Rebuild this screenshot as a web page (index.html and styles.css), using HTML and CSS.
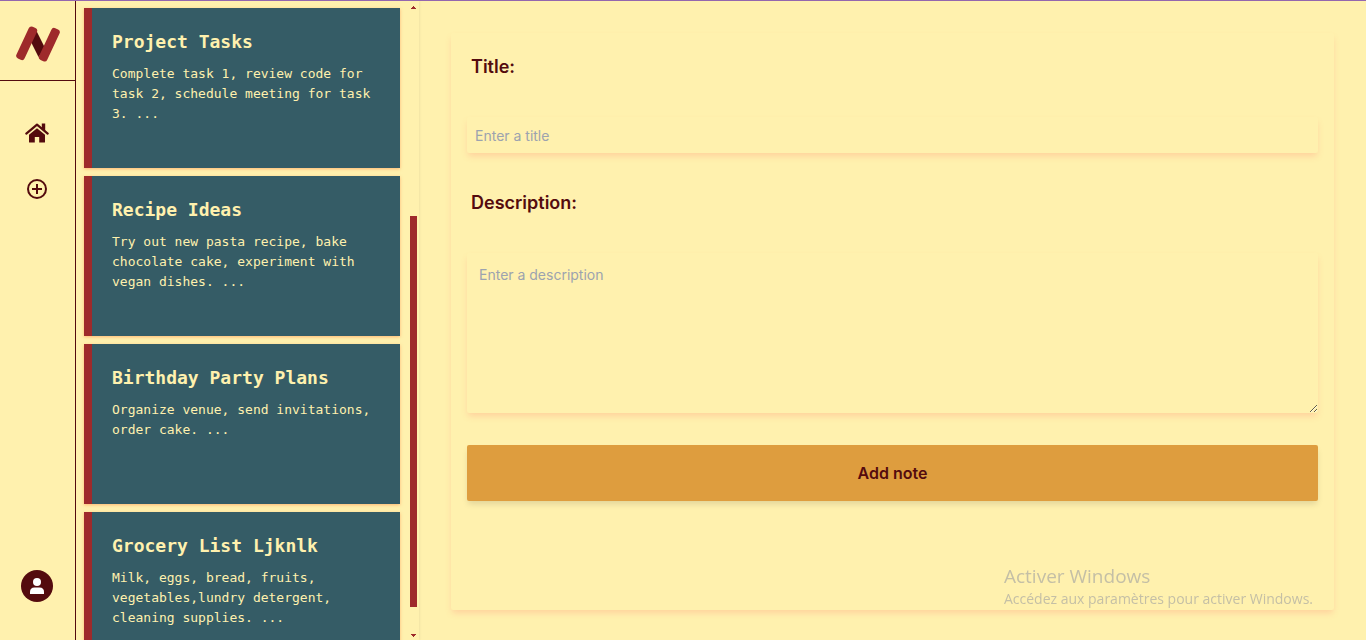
FILE: index.html
```html
<!DOCTYPE html>
<html lang="en">
<head>
<meta charset="utf-8">
<title>Notes</title>
<link rel="stylesheet" href="styles.css">
</head>
<body>
<div class="app">
  <nav class="sidebar">
    <a class="logo" href="#" aria-label="Notes">
      <svg width="45" height="36" viewBox="0 0 45 36">
        <path d="M21 4 30 22 23.500 31 15 14Z" fill="#540b0e"/>
        <g fill="#9e2a2b">
          <rect x="7.200" y="-0.200" width="9" height="35" rx="3" transform="rotate(25 11.700 17.300)"/>
          <rect x="29.800" y="1.200" width="9" height="35" rx="3" transform="rotate(25 34.300 18.700)"/>
        </g>
      </svg>
    </a>
    <a class="nav-link" href="#" aria-label="Home">
      <svg width="25" height="20" viewBox="0 0 25 20" fill="#540b0e">
        <path d="M12 5.200 4 11.800V19q0 .6.600.6H9.800V14h4.400v5.600h5.200q.6 0 .6-.6v-7.200Z"/>
        <path d="M1.300 10.600 12 1.700 22.700 10.600" fill="none" stroke="#540b0e" stroke-width="2.200" stroke-linecap="round" stroke-linejoin="round"/>
        <path d="M16.800.6h3.400v7.400l-3.400-3Z"/>
      </svg>
    </a>
    <a class="nav-link" href="#" aria-label="Add note">
      <svg width="21" height="20" viewBox="0 0 21 20" fill="none" stroke="#540b0e" stroke-width="2">
        <circle cx="10" cy="10" r="9"/><path d="M10 5v10M5 10h10"/>
      </svg>
    </a>
    <a class="profile" href="#" aria-label="Profile">
      <svg width="33" height="32" viewBox="0 0 33 32">
        <circle cx="16" cy="16" r="16" fill="#540b0e"/>
        <circle cx="16" cy="12" r="4" fill="#fff"/>
        <path d="M9 24v-2q0-4.500 4.500-4.500h5q4.500 0 4.500 4.500v2Z" fill="#fff"/>
      </svg>
    </a>
  </nav>
  <section class="notes">
    <div class="note-list">
      <article class="note"><h2 class="note-title">Project Tasks</h2><p class="note-text">Complete task 1, review code for task 2, schedule meeting for task 3. ...</p></article>
      <article class="note"><h2 class="note-title">Recipe Ideas</h2><p class="note-text">Try out new pasta recipe, bake chocolate cake, experiment with vegan dishes. ...</p></article>
      <article class="note"><h2 class="note-title">Birthday Party Plans</h2><p class="note-text">Organize venue, send invitations, order cake. ...</p></article>
      <article class="note"><h2 class="note-title">Grocery List Ljknlk</h2><p class="note-text">Milk, eggs, bread, fruits, vegetables,lundry detergent, cleaning supplies. ...</p></article>
    </div>
    <div class="scrollbar">
      <svg width="5" height="3" viewBox="0 0 5 3" fill="#9e2a2b" shape-rendering="crispEdges"><path d="M2 0h1v1h1v1h1v1H0V2h1V1h1Z"/></svg>
      <div class="track"><div class="thumb"></div></div>
      <svg width="5" height="3" viewBox="0 0 5 3" fill="#9e2a2b" shape-rendering="crispEdges"><path d="M0 0h5v1H4v1H3v1H2V2H1V1H0Z"/></svg>
    </div>
  </section>
  <main class="main">
    <form class="note-form">
      <label class="label" for="title">Title:</label>
      <input class="field" id="title" type="text" placeholder="Enter a title">
      <label class="label" for="description">Description:</label>
      <textarea class="field area" id="description" placeholder="Enter a description"></textarea>
      <button class="submit" type="button">Add note</button>
    </form>
  </main>
</div>
<aside class="watermark">
  <p class="watermark-title">Activer Windows</p>
  <p class="watermark-text">Accédez aux paramètres pour activer Windows.</p>
</aside>
</body>
</html>
```
FILE: styles.css
```css
* { box-sizing: border-box; }
body, h2, p { margin: 0; }
body {
  background: #fff1ae;
  color: #540b0e;
  font-family: Inter, "Liberation Sans", sans-serif;
}
.app {
  display: flex;
  height: 100vh;
  overflow: hidden;
  border-top: 1px solid #9467ae;
}
.sidebar {
  flex: 0 0 76px;
  display: flex;
  flex-direction: column;
  align-items: center;
  border-right: 1px solid #540b0e;
  padding-bottom: 38px;
}
.logo {
  align-self: stretch;
  display: grid;
  place-items: center;
  height: 80px;
  padding-top: 7px;
  border-bottom: 1px solid #540b0e;
  margin-bottom: 24px;
}
.nav-link {
  display: grid;
  place-items: center;
  width: 55px;
  height: 56px;
}
.profile { margin-top: auto; height: 32px; }
.notes {
  flex: 0 0 343px;
  display: flex;
  justify-content: space-between;
  box-shadow: 1px 0 2px rgba(0, 0, 0, 0.06);
}
.note-list {
  flex: 0 0 332px;
  display: flex;
  flex-direction: column;
  gap: 8px;
  padding: 7px 8px 0;
  overflow: hidden;
}
.note {
  flex: 0 0 160px;
  padding: 20px;
  background: #355c66;
  border-left: 8px solid #9e2a2b;
  color: #fff1ae;
  font-family: "DejaVu Sans Mono", monospace;
  box-shadow: 0 1px 3px rgba(255, 130, 60, 0.5);
}
.note-title { font-size: 18px; line-height: 28px; margin-bottom: 8px; }
.note-text { font-size: 13px; line-height: 20px; margin-right: -8px; }
.scrollbar {
  width: 7px;
  margin-right: 2px;
  padding: 5px 0 3px;
  display: flex;
  flex-direction: column;
  align-items: center;
}
.track {
  flex: 1;
  align-self: stretch;
  display: grid;
  grid-template-rows: 207fr 391fr 27fr;
}
.thumb { grid-row: 2; background: #9e2a2b; }
.main {
  flex: 1;
  display: flex;
  padding: 32px 32px 30px;
}
.note-form {
  flex: 1;
  display: flex;
  flex-direction: column;
  padding: 16px;
  border-radius: 2px;
  box-shadow: 0 4px 6px -1px rgba(255, 140, 120, 0.3);
}
.label {
  padding: 4px;
  margin-bottom: 32px;
  font-size: 18px;
  line-height: 28px;
  font-weight: 600;
}
.field {
  height: 36px;
  margin: 0 0 32px;
  padding: 8px;
  border: 0;
  border-radius: 2px;
  outline: 0;
  background: transparent;
  color: inherit;
  font: 14px/20px Inter, "Liberation Sans", sans-serif;
  box-shadow: 0 4px 6px -1px rgba(255, 140, 120, 0.3);
}
.field::placeholder { color: #9ca3af; }
.area { height: 160px; padding: 12px; resize: vertical; }
.submit {
  height: 56px;
  border: 0;
  border-radius: 2px;
  background: #de9d3e;
  color: inherit;
  font: 600 16px/24px Inter, "Liberation Sans", sans-serif;
  box-shadow: 0 4px 6px -1px rgba(0, 0, 0, 0.12);
}
.watermark {
  position: fixed;
  right: 53px;
  bottom: 31px;
  color: #c4bfa6;
  font-family: "Open Sans", "Noto Sans", sans-serif;
  pointer-events: none;
}
.watermark-title { font-size: 19px; line-height: 26px; }
.watermark-text { font-size: 14px; line-height: 20px; }
```
